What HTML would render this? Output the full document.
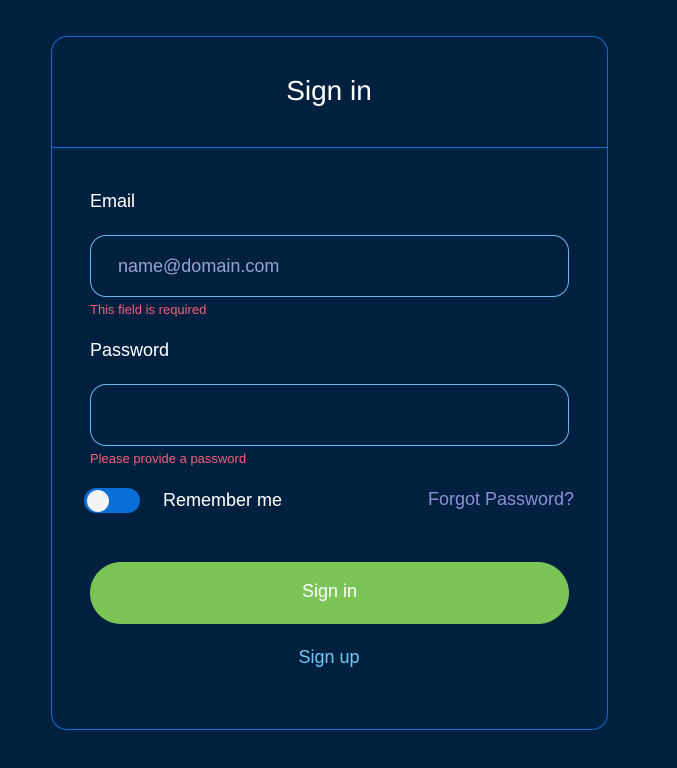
<!DOCTYPE html>
<html><head><style>
body{margin:0;width:677px;height:768px;background:#00203f;font-family:"Liberation Sans",sans-serif;color:#fff;position:relative;overflow:hidden}
.card{position:absolute;left:51px;top:36px;width:557px;height:694px;border:1px solid #0b6bd0;border-radius:16px;box-sizing:border-box}
.hline{position:absolute;left:52px;top:147px;width:555px;height:1px;background:#1272dc}
.t{position:absolute;white-space:nowrap}
.inp{position:absolute;left:90px;width:479px;height:62px;border:1px solid #69b8ef;border-radius:16px;box-sizing:border-box}
.err{color:#f0607a;font-size:13px}
</style></head><body>
<div class="card"></div>
<div class="hline"></div>
<div class="t" style="left:0;width:658px;text-align:center;top:75px;font-size:28px">Sign in</div>
<div class="t" style="left:90px;top:191px;font-size:18px">Email</div>
<div class="inp" style="top:235px"></div>
<div class="t" style="left:118px;top:256px;font-size:18px;color:#9aa3cf">name@domain.com</div>
<div class="t err" style="left:90px;top:302px">This field is required</div>
<div class="t" style="left:90px;top:340px;font-size:18px">Password</div>
<div class="inp" style="top:384px"></div>
<div class="t err" style="left:90px;top:451px">Please provide a password</div>
<div style="position:absolute;left:84px;top:488px;width:56px;height:25px;border-radius:13px;background:#0a6fd8"></div>
<div style="position:absolute;left:87px;top:490px;width:22px;height:22px;border-radius:50%;background:#f4f4f4"></div>
<div class="t" style="left:163px;top:490px;font-size:18px">Remember me</div>
<div class="t" style="left:428px;top:489px;font-size:18px;color:#8f8fd6">Forgot Password?</div>
<div style="position:absolute;left:90px;top:562px;width:479px;height:62px;border-radius:31px;background:#7ac555"></div>
<div class="t" style="left:90px;width:479px;text-align:center;top:581px;font-size:18px">Sign in</div>
<div class="t" style="left:0;width:658px;text-align:center;top:647px;font-size:18px;color:#6ec6f5">Sign up</div>
</body></html>
